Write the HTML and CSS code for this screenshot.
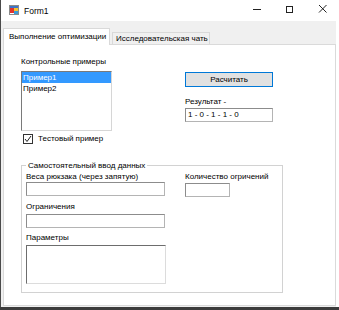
FILE: index.html
```html
<!DOCTYPE html>
<html>
<head>
<meta charset="utf-8">
<title>Form1</title>
<link rel="stylesheet" href="styles.css">
</head>
<body>
<div class="screen">
  <div class="window">
    <div class="titlebar">
      <svg class="appicon" width="10" height="10" viewBox="0 0 10 10">
        <rect x="0.5" y="0.5" width="9" height="9" fill="#ffffff" stroke="#8a8a8a"/>
        <rect x="1" y="1" width="8" height="2" fill="#3b74c8"/>
        <rect x="1" y="3" width="4" height="5" fill="#e2332b"/>
        <rect x="5" y="3" width="4" height="3" fill="#f4c430"/>
        <rect x="5" y="6" width="4" height="3" fill="#3b9ad8"/>
      </svg>
      <span class="title">Form1</span>
      <div class="caption-btns">
        <span class="cbtn">
          <svg width="33" height="21" viewBox="0 0 33 21"><line x1="13" y1="9.5" x2="21" y2="9.5" stroke="#222" stroke-width="1"/></svg>
        </span>
        <span class="cbtn">
          <svg width="33" height="21" viewBox="0 0 33 21"><rect x="13.5" y="6.5" width="6" height="6" fill="none" stroke="#222" stroke-width="1"/></svg>
        </span>
        <span class="cbtn">
          <svg width="33" height="21" viewBox="0 0 33 21"><path d="M13 5 L20.5 12.5 M20.5 5 L13 12.5" stroke="#222" stroke-width="1" fill="none"/></svg>
        </span>
      </div>
    </div>
    <div class="client">
      <div class="tabs">
        <div class="tab tab-active">Выполнение оптимизации</div>
        <div class="tab tab-inactive">Исследовательская чать</div>
      </div>
      <div class="page">
        <div class="top">
          <div class="col-left">
            <div class="lbl">Контрольные примеры</div>
            <div class="listbox">
              <div class="item item-sel">Пример1</div>
              <div class="item">Пример2</div>
            </div>
            <div class="check">
              <span class="cbox">
                <svg width="8" height="8" viewBox="0 0 8 8"><path d="M1 4 L3 6.5 L7 1" fill="none" stroke="#222" stroke-width="1"/></svg>
              </span>
              <span>Тестовый пример</span>
            </div>
          </div>
          <div class="col-right">
            <div class="btn">Расчитать</div>
            <div class="lbl result-lbl">Результат -</div>
            <div class="textbox tb-result">1 - 0 - 1 - 1 - 0</div>
          </div>
        </div>
        <fieldset class="group">
          <legend class="legend">Самостоятельный ввод данных</legend>
          <div class="group-body">
            <div class="g-left">
              <div class="lbl">Веса рюкзака (через запятую)</div>
              <div class="textbox tb-long"></div>
              <div class="lbl mt5">Ограничения</div>
              <div class="textbox tb-long mt2"></div>
              <div class="lbl mt4">Параметры</div>
              <div class="textarea"></div>
            </div>
            <div class="g-right">
              <div class="lbl">Количество огричений</div>
              <div class="textbox tb-small"></div>
            </div>
          </div>
        </fieldset>
      </div>
    </div>
  </div>
  <div class="taskbar"></div>
</div>
</body>
</html>
```
FILE: styles.css
```css
* { box-sizing: border-box; }

html, body {
  margin: 0;
  padding: 0;
  background: #ffffff;
}

body {
  font-family: "Liberation Sans", Arial, sans-serif;
  font-size: 8px;
  color: #000;
}

.screen {
  width: 339px;
  height: 310px;
  overflow: hidden;
  display: flex;
  flex-direction: column;
}

.window {
  height: 307px;
  border-left: 1px solid #4a4a4a;
  display: flex;
  flex-direction: column;
}

.titlebar {
  height: 21px;
  background: #ffffff;
  display: flex;
  align-items: center;
}

.appicon {
  margin-left: 8px;
  margin-top: -1px;
  display: block;
}

.title {
  margin-left: 5px;
  font-size: 8.5px;
  color: #000;
}

.caption-btns {
  margin-left: auto;
  display: flex;
}

.cbtn {
  width: 33px;
  height: 21px;
  display: block;
}

.cbtn svg { display: block; }

.client {
  flex: 1;
  background: #f0f0f0;
  margin-right: 3px;
  padding: 7px 0 1px 2px;
  display: flex;
  flex-direction: column;
}

.tabs {
  height: 16px;
  display: flex;
  align-items: flex-end;
}

.tab {
  line-height: 10px;
  white-space: nowrap;
  border: 1px solid #d9d9d9;
  border-bottom: none;
}

.tab-active {
  width: 107px;
  height: 17px;
  margin-bottom: -1px;
  background: #ffffff;
  padding: 3px 0 0 5px;
  position: relative;
  z-index: 1;
}

.tab-inactive {
  width: 98px;
  height: 12px;
  margin-left: 2px;
  background: #f0f0f0;
  padding: 1px 0 0 3px;
}

.page {
  width: 333px;
  height: 262px;
  background: #ffffff;
  border: 1px solid #dadada;
  padding: 11px 0 0 17px;
}

.top {
  display: flex;
}

.col-left {
  width: 91px;
}

.lbl {
  height: 11px;
  line-height: 11px;
  white-space: nowrap;
}

.listbox {
  margin-top: 4px;
  height: 60px;
  background: #ffffff;
  border: 1px solid;
  border-color: #7a7a7a #d6d6d6 #d6d6d6 #7a7a7a;
}

.item {
  height: 11px;
  line-height: 11px;
  padding-left: 1px;
}

.item-sel {
  background: #3399ff;
  color: #ffffff;
}

.check {
  margin-top: 3px;
  height: 10px;
  display: flex;
  align-items: center;
  white-space: nowrap;
}

.cbox {
  width: 10px;
  height: 10px;
  margin-left: 2px;
  border: 1px solid #333333;
  background: #ffffff;
  display: flex;
  align-items: center;
  justify-content: center;
}

.cbox svg { display: block; }

.check span:last-child {
  margin-left: 5px;
  line-height: 10px;
}

.col-right {
  margin-left: 73px;
  padding-top: 16px;
}

.btn {
  width: 88px;
  height: 15px;
  background: #e1e1e1;
  border: 1px solid #0078d7;
  line-height: 13px;
  text-align: center;
}

.result-lbl {
  margin-top: 9px;
}

.textbox {
  height: 14px;
  background: #ffffff;
  border: 1px solid;
  border-color: #8c8c8c #b4b4b4 #b4b4b4 #8c8c8c;
  line-height: 12px;
  padding-left: 2px;
  white-space: nowrap;
}

.tb-result {
  width: 88px;
  margin-top: 1px;
}

.group {
  margin: 16px 0 0 0;
  width: 262px;
  height: 133px;
  border: 1px solid #d2d2d2;
  padding: 0 0 0 4px;
  min-width: 0;
}

.legend {
  padding: 0 2px;
  line-height: 11px;
  font-size: 8px;
}

.group-body {
  display: flex;
}

.g-left {
  width: 140px;
}

.tb-long {
  width: 139px;
}

.mt5 { margin-top: 5px; }
.mt4 { margin-top: 4px; }
.mt2 { margin-top: 2px; }

.textarea {
  margin-top: 2px;
  width: 140px;
  height: 39px;
  background: #ffffff;
  border: 1px solid;
  border-color: #6d6d6d #dcdcdc #dcdcdc #6d6d6d;
}

.g-right {
  margin-left: 19px;
}

.tb-small {
  width: 45px;
  margin-top: 1px;
}

.taskbar {
  height: 3px;
  background: #3c3c3c;
}
```
